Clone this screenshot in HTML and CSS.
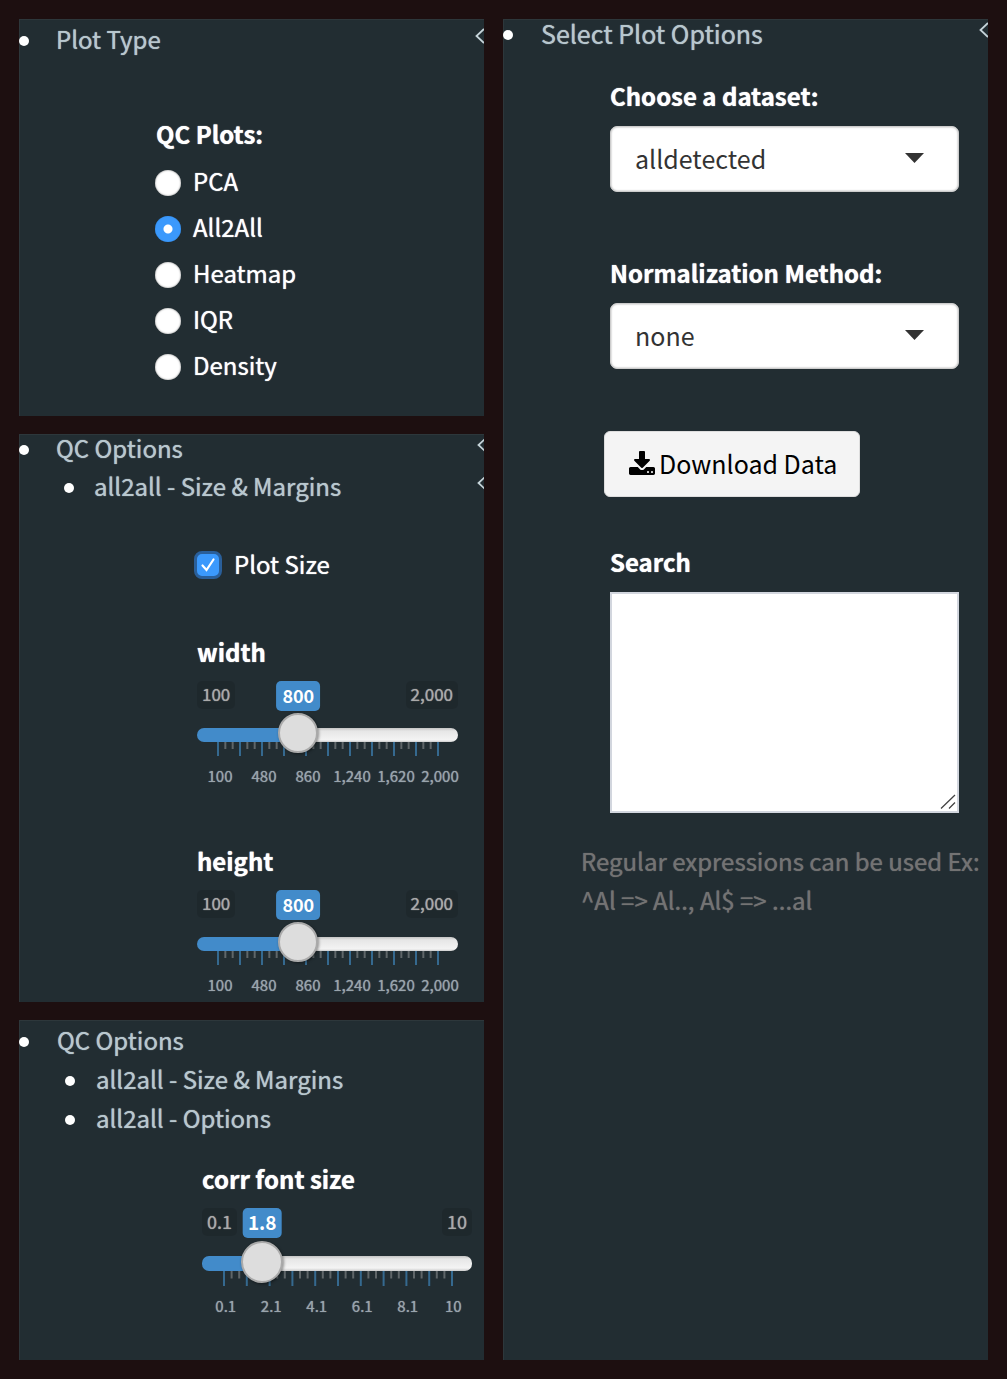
FILE: index.html
```html
<!DOCTYPE html>
<html lang="en">
<head>
<meta charset="utf-8">
<meta name="viewport" content="width=device-width, initial-scale=1">
<title>Plot Options</title>
<link rel="stylesheet" href="styles.css">
</head>
<body>
<svg class="sprite" aria-hidden="true">
  <symbol id="chevron" viewBox="0 0 9 16" preserveAspectRatio="xMinYMid slice"><path d="M9 1 1.500 8 9 15" fill="none" stroke="currentColor" stroke-width="1.800"/></symbol>
  <symbol id="caret" viewBox="0 0 19 10"><path d="M0 0h19l-9.500 10z" fill="currentColor"/></symbol>
</svg>
<main class="board">
  <div class="column">
    <section class="panel panel-type">
      <ul class="menu">
        <li><div class="item"><a href="#">Plot Type</a><svg class="chevron"><use href="#chevron"/></svg></div></li>
      </ul>
      <fieldset class="radios">
        <legend>QC Plots:</legend>
        <label><input type="radio" name="plot" value="pca">PCA</label>
        <label><input type="radio" name="plot" value="all2all" checked>All2All</label>
        <label><input type="radio" name="plot" value="heatmap">Heatmap</label>
        <label><input type="radio" name="plot" value="iqr">IQR</label>
        <label><input type="radio" name="plot" value="density">Density</label>
      </fieldset>
    </section>

    <section class="panel panel-size">
      <ul class="menu">
        <li>
          <div class="item"><a href="#">QC Options</a><svg class="chevron"><use href="#chevron"/></svg></div>
          <ul>
            <li><div class="item"><a href="#">all2all - Size &amp; Margins</a><svg class="chevron"><use href="#chevron"/></svg></div></li>
          </ul>
        </li>
      </ul>
      <label class="check"><input type="checkbox" checked>Plot Size</label>
      <div class="slider">
        <label for="width">width</label>
        <div class="badges"><span>100</span><output for="width" style="--at:.368">800</output><span>2,000</span></div>
        <input id="width" type="range" min="100" max="2000" step="10" value="800" style="--at:.368">
        <svg class="ticks" viewBox="0 0 30 14" preserveAspectRatio="none"><path class="major" d="M0 0v14M3 0v14M6 0v14M9 0v14M12 0v14M15 0v14M18 0v14M21 0v14M24 0v14M27 0v14M30 0v14"/><path class="minor" d="M1 0v7M2 0v7M4 0v7M5 0v7M7 0v7M8 0v7M10 0v7M11 0v7M13 0v7M14 0v7M16 0v7M17 0v7M19 0v7M20 0v7M22 0v7M23 0v7M25 0v7M26 0v7M28 0v7M29 0v7"/></svg>
        <div class="scale"><span>100</span><span>480</span><span>860</span><span>1,240</span><span>1,620</span><span>2,000</span></div>
      </div>
      <div class="slider">
        <label for="height">height</label>
        <div class="badges"><span>100</span><output for="height" style="--at:.368">800</output><span>2,000</span></div>
        <input id="height" type="range" min="100" max="2000" step="10" value="800" style="--at:.368">
        <svg class="ticks" viewBox="0 0 30 14" preserveAspectRatio="none"><path class="major" d="M0 0v14M3 0v14M6 0v14M9 0v14M12 0v14M15 0v14M18 0v14M21 0v14M24 0v14M27 0v14M30 0v14"/><path class="minor" d="M1 0v7M2 0v7M4 0v7M5 0v7M7 0v7M8 0v7M10 0v7M11 0v7M13 0v7M14 0v7M16 0v7M17 0v7M19 0v7M20 0v7M22 0v7M23 0v7M25 0v7M26 0v7M28 0v7M29 0v7"/></svg>
        <div class="scale"><span>100</span><span>480</span><span>860</span><span>1,240</span><span>1,620</span><span>2,000</span></div>
      </div>
    </section>

    <section class="panel panel-font">
      <ul class="menu">
        <li>
          <div class="item"><a href="#">QC Options</a></div>
          <ul>
            <li><div class="item"><a href="#">all2all - Size &amp; Margins</a></div></li>
            <li><div class="item"><a href="#">all2all - Options</a></div></li>
          </ul>
        </li>
      </ul>
      <div class="slider">
        <label for="corr">corr font size</label>
        <div class="badges"><span>0.1</span><output for="corr" style="--at:.172">1.8</output><span>10</span></div>
        <input id="corr" type="range" min="0.1" max="10" step="0.1" value="1.8" style="--at:.172">
        <svg class="ticks" viewBox="0 0 30 14" preserveAspectRatio="none"><path class="major" d="M0 0v14M3 0v14M6 0v14M9 0v14M12 0v14M15 0v14M18 0v14M21 0v14M24 0v14M27 0v14M30 0v14"/><path class="minor" d="M1 0v7M2 0v7M4 0v7M5 0v7M7 0v7M8 0v7M10 0v7M11 0v7M13 0v7M14 0v7M16 0v7M17 0v7M19 0v7M20 0v7M22 0v7M23 0v7M25 0v7M26 0v7M28 0v7M29 0v7"/></svg>
        <div class="scale"><span>0.1</span><span>2.1</span><span>4.1</span><span>6.1</span><span>8.1</span><span>10</span></div>
      </div>
    </section>
  </div>

  <section class="panel panel-options">
    <ul class="menu">
      <li><div class="item"><a href="#">Select Plot Options</a><svg class="chevron"><use href="#chevron"/></svg></div></li>
    </ul>
    <form class="form">
      <div class="field">
        <label for="dataset">Choose a dataset:</label>
        <div class="select">
          <select id="dataset"><option>alldetected</option></select>
          <svg class="caret"><use href="#caret"/></svg>
        </div>
      </div>
      <div class="field">
        <label for="norm">Normalization Method:</label>
        <div class="select">
          <select id="norm"><option>none</option></select>
          <svg class="caret"><use href="#caret"/></svg>
        </div>
      </div>
      <button class="download" type="button">
        <svg viewBox="0 -128 1664 1536"><path d="M1280 1216q0-26-19-45t-45-19-45 19-19 45 19 45 45 19 45-19 19-45zm256 0q0-26-19-45t-45-19-45 19-19 45 19 45 45 19 45-19 19-45zm128-224v320q0 40-28 68t-68 28h-1472q-40 0-68-28t-28-68v-320q0-40 28-68t68-28h465l135 136q58 56 136 56t136-56l136-136h464q40 0 68 28t28 68zm-325-569q17 41-14 70l-448 448q-18 19-45 19t-45-19l-448-448q-31-29-14-70 17-39 59-39h256v-448q0-26 19-45t45-19h256q26 0 45 19t19 45v448h256q42 0 59 39z"/></svg>
        Download Data
      </button>
      <div class="field field-search">
        <label for="search">Search</label>
        <div class="area">
          <textarea id="search"></textarea>
          <svg class="grip" viewBox="0 0 16 16"><path d="M1 14.500 15 1M9 14.500 15 8.500" fill="none" stroke="currentColor" stroke-width="1.300"/></svg>
        </div>
      </div>
      <p class="hint">Regular expressions can be used Ex:<br>^Al =&gt; Al.., Al$ =&gt; ...al</p>
    </form>
  </section>
</main>
</body>
</html>
```
FILE: styles.css
```css
*, *::before, *::after { box-sizing: border-box; }

body {
  margin: 0;
  background: #1d0f10;
  color: #fff;
  font: 24px/38px "Noto Sans CJK SC", "Noto Sans", sans-serif;
}

ul { margin: 0; padding: 0; list-style: none; }
input, select, textarea, button { margin: 0; font: inherit; }
.sprite { display: none; }

.board {
  display: grid;
  grid-template-columns: 93fr 97fr;
  gap: 19px;
  min-height: 100vh;
  padding: 19px;
}

.column { display: flex; flex-direction: column; gap: 18px; }

.panel {
  --gap: 27px;
  --indent: 45px;
  --subgap: 20px;
  background: #222d32;
  box-shadow: inset 1px 1px #2d373b;
}

.panel-type { padding: 1px 0 28px; }
.panel-size { padding-bottom: 7px; line-height: 37px; }
.panel-font { flex: 1; padding-bottom: 40px; line-height: 39px; }
.panel-options { font-size: 25px; }
.panel-font, .panel-options { --gap: 28px; --indent: 46px; --subgap: 21px; }

/* Tree menu */
.menu ul { padding-left: var(--indent); }
.menu ul .item { gap: var(--subgap); }

.item { display: flex; align-items: center; gap: var(--gap); }

.panel-size .menu > li > .item,
.panel-options .menu > li > .item { margin-bottom: 5px; line-height: 28px; }

.item::before {
  content: "";
  width: 10px;
  height: 10px;
  margin-top: 4px;
  border-radius: 50%;
  background: #fff;
}

.item a {
  flex: 1;
  color: #b8c7ce;
  text-decoration: none;
  text-shadow: 0 0 1px #b8c7ce;
}

.chevron { width: 9px; height: 16px; margin-bottom: 6px; color: #c5d3d9; }
.panel-size .chevron { width: 7px; }

/* Radio group */
.radios { margin: 0; padding: 57px 20px 0 136px; border: 0; }
.radios legend { float: left; width: 100%; margin-bottom: 5px; padding: 0 1px; }

.radios legend, .slider label, .field label {
  font-size: 24px;
  font-weight: 700;
  text-shadow: 0 0 1px #fff;
}

.radios label {
  clear: both;
  display: flex;
  align-items: center;
  gap: 12px;
  height: 46px;
}

.radios label, .check { text-shadow: 0 0 1px #fff; }

.radios input {
  appearance: none;
  width: 26px;
  height: 26px;
  margin-top: 4px;
  border-radius: 50%;
  background: #fff;
  box-shadow: inset 0 0 2px #777;
}

.radios input:checked {
  background: radial-gradient(circle, #fff 4px, #3b99fc 5px);
  box-shadow: inset 0 0 1px #2a7bd0;
}

/* Check box */
.check {
  display: flex;
  align-items: center;
  gap: 12px;
  margin-top: 41px;
  padding-left: 175px;
  line-height: 38px;
}

.check input {
  appearance: none;
  width: 28px;
  height: 28px;
  margin-top: 2px;
  border: 3px solid #2a5f9a;
  border-radius: 8px;
  background: #3b99fc url("data:image/svg+xml,%3Csvg xmlns='http://www.w3.org/2000/svg' viewBox='0 0 22 22'%3E%3Cpath d='M5.500 11.500 9.500 16 16.500 5.500' fill='none' stroke='white' stroke-width='2.200' stroke-linecap='round'/%3E%3C/svg%3E") center / 22px;
}

/* Sliders */
.slider {
  --track: 14px;
  --thumb: 40px;
  --inset: 21px;
  display: flex;
  flex-direction: column;
  margin: 50px 26px 0 178px;
}

.slider + .slider { margin-top: 56px; }
.slider label { line-height: 38px; }

.badges {
  position: relative;
  display: flex;
  justify-content: space-between;
  height: 30px;
  margin-top: 10px;
  font-size: 17px;
  line-height: 26px;
}

.badges span {
  height: 28px;
  padding: 0 5px;
  border-radius: 5px;
  background: #0000001a;
  color: #aaa;
  text-shadow: 0 0 1px #aaa;
}

.badges output {
  position: absolute;
  top: 0;
  left: calc(var(--thumb) / 2 + (100% - var(--thumb)) * var(--at));
  height: 30px;
  padding: 0 6px;
  border-radius: 5px;
  background: #428bca;
  font-size: 18px;
  font-weight: 700;
  line-height: 28px;
  transform: translateX(-50%);
}

.slider input {
  appearance: none;
  position: relative;
  z-index: 1;
  width: 100%;
  height: var(--track);
  margin-top: 17px;
  border-radius: 7px;
  background:
    linear-gradient(#428bca, #428bca) 0 0 / calc(var(--thumb) / 2 + (100% - var(--thumb)) * var(--at)) 100% no-repeat,
    linear-gradient(#c4c4c4, #e6e6e6 3px, #f4f4f4 12px, #ccc);
}

.slider input::-webkit-slider-runnable-track { height: var(--track); }

.slider input::-webkit-slider-thumb {
  appearance: none;
  width: var(--thumb);
  height: var(--thumb);
  margin-top: -15px;
  border: 2px solid #aaa;
  border-radius: 50%;
  background: #ddd;
  box-shadow: 1px 1px 3px #0006;
}

.ticks {
  width: calc(100% - 20px - var(--inset));
  height: var(--track);
  margin-left: var(--inset);
  overflow: visible;
}

.ticks path { fill: none; stroke-width: 2px; vector-effect: non-scaling-stroke; }
.ticks .major { stroke: #35698f; }
.ticks .minor { stroke: #5f6669; }

.scale {
  display: grid;
  grid-template-columns: repeat(6, 1fr);
  margin: 10px -4px 0 1px;
  color: #99a4ac;
  font-size: 15px;
  line-height: 20px;
  text-align: center;
  text-shadow: 0 0 1px #99a4ac;
}

.panel-font .slider {
  --track: 15px;
  --thumb: 42px;
  --inset: 22px;
  margin: 23px 12px 0 183px;
}

.panel-font .badges { font-size: 18px; }
.panel-font .badges output { padding: 0 5px; font-size: 19px; }
.panel-font .slider input { margin-top: 18px; }

/* Options form */
.form {
  display: flex;
  flex-direction: column;
  padding: 25px 29px 20px 107px;
}

.field { display: flex; flex-direction: column; gap: 11px; }
.field + .field { margin-top: 62px; }

.select, .area { display: grid; }
.select > *, .area > * { grid-area: 1 / 1; }

.select select {
  appearance: none;
  height: 66px;
  padding: 0 60px 3px 24px;
  border: 1px solid #ccc;
  border-radius: 7px;
  background: #fff;
  box-shadow: inset 0 0 2px #999;
  color: #333;
}

.caret {
  place-self: center end;
  width: 19px;
  height: 10px;
  margin: 0 35px 3px 0;
  color: #333;
  pointer-events: none;
}

.download {
  display: flex;
  align-items: center;
  align-self: flex-start;
  gap: 4px;
  height: 66px;
  margin: 62px 0 46px -6px;
  padding: 0 22px 3px 24px;
  border: 1px solid #ddd;
  border-radius: 6px;
  background: #f4f4f4;
  color: #000;
}

.download svg { width: 26px; height: 24px; }

.area textarea {
  height: 221px;
  padding: 8px 24px;
  border: 2px solid #d2d6de;
  border-radius: 0;
  color: #333;
  resize: none;
}

.grip {
  place-self: end;
  width: 16px;
  height: 16px;
  margin: 3px;
  color: #444;
  pointer-events: none;
}

.hint {
  margin: 28px -29px 0;
  color: #737373;
  font-size: 24px;
  line-height: 39px;
  text-shadow: 0 0 1px #737373;
}
```
